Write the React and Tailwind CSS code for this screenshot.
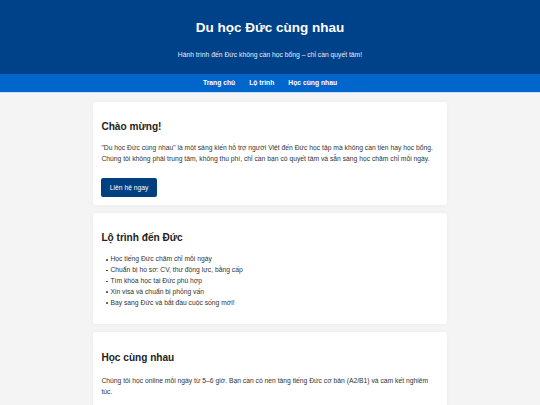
export default function App() {
  const steps = [
    'Học tiếng Đức chăm chỉ mỗi ngày',
    'Chuẩn bị hồ sơ: CV, thư động lực, bằng cấp',
    'Tìm khóa học tại Đức phù hợp',
    'Xin visa và chuẩn bị phỏng vấn',
    'Bay sang Đức và bắt đầu cuộc sống mới!',
  ]

  return (
    <div className="min-h-[405px] bg-[#f4f4f4] font-['Liberation_Sans',Arial,sans-serif] text-[#333] text-[6.75px] leading-[1.6]">
      <header className="h-[74px] bg-[#00428a] text-white text-center pt-[17px]">
        <h1 className="text-[13.5px] font-bold leading-[21.6px]">Du học Đức cùng nhau</h1>
        <p className="mt-[11px] leading-[10.8px] text-[#e6eef8]">
          Hành trình đến Đức không cần học bổng – chỉ cần quyết tâm!
        </p>
      </header>

      <nav className="h-[19px] bg-[#0066cc] border-b border-[#bfe0ff] flex items-center justify-center gap-[14px] font-bold text-white">
        <a href="#">Trang chủ</a>
        <a href="#">Lộ trình</a>
        <a href="#">Học cùng nhau</a>
      </nav>

      <main className="w-[354px] mx-auto pt-[9px] flex flex-col gap-[8.5px]">
        <section className="bg-white rounded-[3px] px-[8.4px] pt-[16.8px] pb-[8px] shadow-[0_0_4px_rgba(0,0,0,0.04)]">
          <h2 className="text-[10.1px] font-bold leading-[16px] text-[#222]">Chào mừng!</h2>
          <p className="mt-[8.4px]">
            "Du học Đức cùng nhau" là một sáng kiến hỗ trợ người Việt đến Đức học tập mà không cần tiền hay học bổng.
            Chúng tôi không phải trung tâm, không thu phí, chỉ cần bạn có quyết tâm và sẵn sàng học chăm chỉ mỗi ngày.
          </p>
          <a
            href="#"
            className="inline-block mt-[13px] px-[8.4px] h-[19px] leading-[19px] bg-[#004080] text-white rounded-[2px]"
          >
            Liên hệ ngay
          </a>
        </section>

        <section className="bg-white rounded-[3px] px-[8.4px] pt-[16.8px] pb-[15.5px] shadow-[0_0_4px_rgba(0,0,0,0.04)]">
          <h2 className="text-[10.1px] font-bold leading-[16px] text-[#222]">Lộ trình đến Đức</h2>
          <ul className="mt-[8.4px] pl-[5px]">
            {steps.map((s) => (
              <li key={s} className="flex items-center gap-[2.5px]">
                <span className="w-[1.6px] h-[1.6px] rounded-full bg-[#333]" />
                <span>{s}</span>
              </li>
            ))}
          </ul>
        </section>

        <section className="bg-white rounded-[3px] px-[8.4px] pt-[18px] pb-[12px] shadow-[0_0_4px_rgba(0,0,0,0.04)]">
          <h2 className="text-[10.1px] font-bold leading-[16px] text-[#222]">Học cùng nhau</h2>
          <p className="mt-[9.5px]">
            Chúng tôi học online mỗi ngày từ 5–6 giờ. Bạn cần có nền tảng tiếng Đức cơ bản (A2/B1) và cam kết nghiêm túc.
          </p>
          <p className="mt-[7.5px] font-bold">Lịch học và yêu cầu:</p>
        </section>
      </main>
    </div>
  )
}
